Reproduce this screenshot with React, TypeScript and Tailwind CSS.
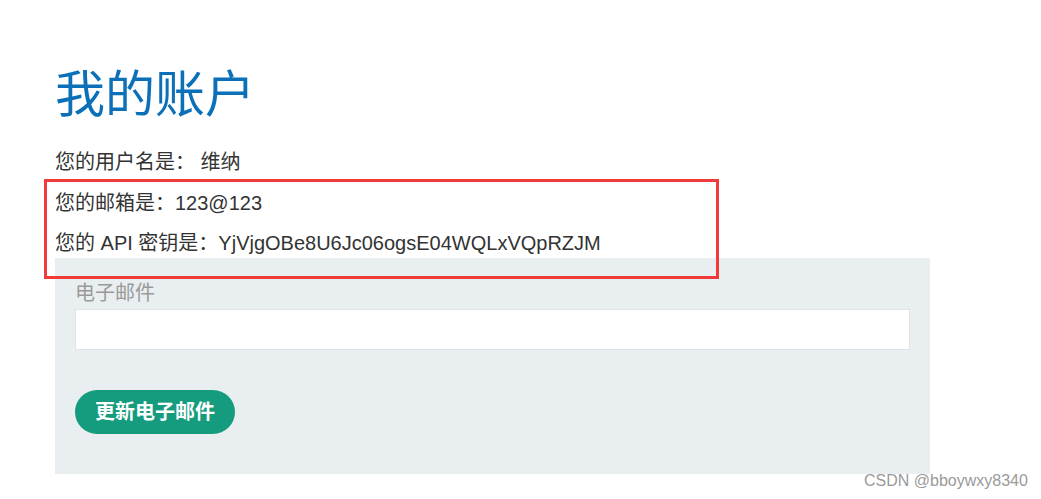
export default function App() {
  const font = { fontFamily: '"Liberation Sans", "Noto Sans CJK SC", sans-serif' };
  return (
    <div className="relative h-[499px] w-[1041px] overflow-hidden bg-white" style={font}>
      <div className="pl-[55px] pt-[65px]">
        <h1 className="text-[50px] leading-[60px] font-normal text-[#0c70b9]">我的账户</h1>
        <p className="mt-[22px] text-[20px] leading-[30px] text-[#333333]">您的用户名是： 维纳</p>
        <p className="mt-[11px] text-[20px] leading-[30px] text-[#333333]">您的邮箱是：123@123</p>
        <p className="mt-[10px] text-[20px] leading-[30px] text-[#333333]">您的 API 密钥是：YjVjgOBe8U6Jc06ogsE04WQLxVQpRZJM</p>
        <div className="flex w-[875px] flex-col items-start bg-[#e9eef1] px-[20px] pt-[20px] pb-[40px]">
          <label className="mb-[1px] text-[20px] leading-[30px] text-[#9a9a9a]">电子邮件</label>
          <input className="h-[41px] w-full border border-[#e1e4e6] bg-white outline-none" />
          <button className="mt-[40px] h-[44px] w-[160px] rounded-full bg-[#159c7e] text-[20px] font-bold text-white">
            更新电子邮件
          </button>
        </div>
      </div>
      <div className="pointer-events-none absolute left-[44px] top-[179px] h-[100px] w-[675px] border-[3px] border-[#f13b3b]" />
      <div className="absolute left-[864px] top-[471px] text-[16px] leading-[20px] text-[#9a9a9a]">CSDN @bboywxy8340</div>
    </div>
  );
}
